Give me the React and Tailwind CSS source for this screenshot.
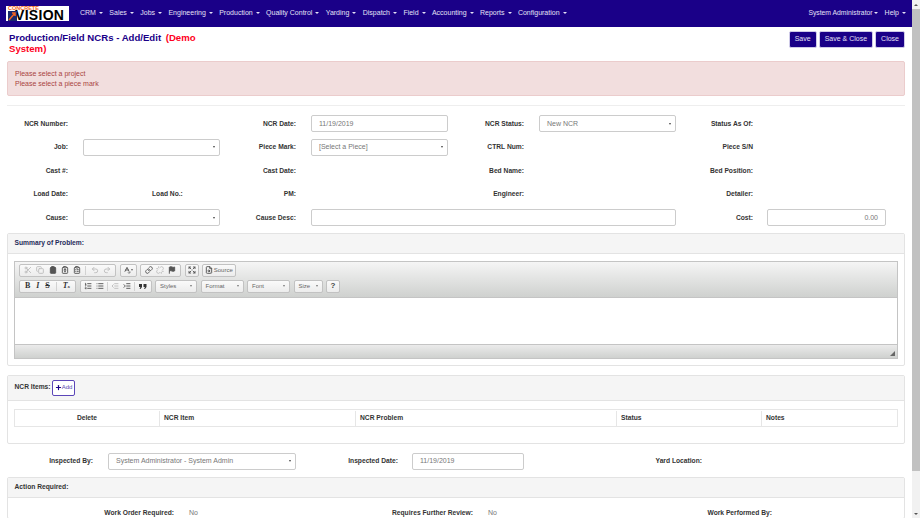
import {
  Scissors, Copy, Clipboard, ClipboardType, ClipboardList, Undo2, Redo2, SpellCheck, Link, Unlink, Flag,
  Expand, FileSearch, ListOrdered, List, IndentDecrease, IndentIncrease, Plus,
} from 'lucide-react'

const navItems = ['CRM', 'Sales', 'Jobs', 'Engineering', 'Production', 'Quality Control', 'Yarding', 'Dispatch', 'Field', 'Accounting', 'Reports', 'Configuration']

function Caret({ tight }) {
  return <span className={`${tight ? 'ml-[1px]' : 'ml-[3px]'} inline-block border-x-[2px] border-t-[2px] border-x-transparent border-t-current align-middle`} />
}

function Logo() {
  return (
    <div className="relative flex h-[15px] w-[63px] flex-col bg-white">
      <span className="pl-[2px] text-[5.5px] leading-[4px] font-bold text-[#f26522]">CONCRETE</span>
      <span className="pl-[9px] text-[14px] leading-[11px] font-bold tracking-[0.3px] text-black">VISION</span>
      <svg className="absolute bottom-0 left-[2px]" width="9" height="10" viewBox="0 0 9 10">
        <path d="M0 0h9v10H0z" fill="#1a2a6c" />
        <path d="M1 9l6-7M4 2h3v3" stroke="#f26522" strokeWidth="1.5" fill="none" />
      </svg>
    </div>
  )
}

function TopNav() {
  return (
    <nav className="flex h-[27px] shrink-0 items-center bg-[#1a0088] px-[6px] text-[7px] text-[#e4e1f6]">
      <Logo />
      <div className="ml-[11px] flex gap-[6.4px]">
        {navItems.map((item) => (
          <span key={item}>{item}<Caret /></span>
        ))}
      </div>
      <div className="ml-auto flex gap-[7px]">
        <span className="text-[6.8px]">System Administrator<Caret tight /></span>
        <span>Help<Caret /></span>
      </div>
    </nav>
  )
}

function Label({ children, className = '' }) {
  return <div className={`text-right text-[6.7px] font-bold text-[#333] ${className}`}>{children}</div>
}

function TextBox({ value, right, className = '' }) {
  return (
    <div className={`flex h-[17px] items-center rounded-[2px] border border-[#ccc] bg-white px-[7px] text-[7px] text-[#777] ${right ? 'justify-end' : ''} ${className}`}>
      {value}
    </div>
  )
}

function SelectBox({ value, className = '' }) {
  return (
    <div className={`flex h-[17px] items-center justify-between rounded-[2px] border border-[#ccc] bg-white pl-[7px] pr-[4px] text-[7px] text-[#777] ${className}`}>
      <span>{value}</span>
      <span className="border-x-[1.5px] border-t-[2px] border-x-transparent border-t-[#444]" />
    </div>
  )
}

function FormRow({ children }) {
  return (
    <div className="grid h-[23.5px] grid-cols-[61px_15px_137px_76px_15px_137px_76px_15px_137px_77px_14px_119px] items-center">
      {children}
    </div>
  )
}

function ToolGroup({ children, className = '' }) {
  return <div className={`flex h-[13.5px] items-center justify-around rounded-[2px] border border-[#c2c2c2] bg-gradient-to-b from-[#fafafa] to-[#ececec] px-[2px] ${className}`}>{children}</div>
}

function Tool({ icon: Icon, faded, filled }) {
  return <Icon size={8} strokeWidth={2.8} fill={filled ? 'currentColor' : 'none'} className={faded ? 'text-[#bdbdbd]' : 'text-[#555]'} />
}

function Divider() {
  return <span className="h-[9px] w-px bg-[#d2d2d2]" />
}

function Glyph({ children, className = '' }) {
  return <span className={`text-[8px] leading-none text-[#333] font-['Liberation_Serif',serif] ${className}`}>{children}</span>
}

function QuoteMark() {
  return (
    <svg width="8" height="5" viewBox="0 0 8 5" className="text-[#333]">
      <path d="M0 0h3v3L1.5 5H0.6L1.4 3H0zM4.5 0h3v3L6 5h-0.9L5.9 3H4.5z" fill="currentColor" />
    </svg>
  )
}

function Combo({ label, className = '' }) {
  return (
    <div className={`flex h-[13.5px] items-center justify-between rounded-[2px] border border-[#c2c2c2] bg-gradient-to-b from-[#fafafa] to-[#ececec] px-[4px] text-[6px] text-[#666] ${className}`}>
      <span>{label}</span>
      <span className="border-x-[1.5px] border-t-[2px] border-x-transparent border-t-[#777]" />
    </div>
  )
}

function Editor() {
  return (
    <div className="border border-[#c4c4c4]">
      <div className="flex h-[35px] flex-col gap-[2.5px] bg-gradient-to-b from-[#f5f5f5] to-[#cfd1cf] px-[4px] pt-[2px]">
        <div className="flex gap-[3.5px]">
          <ToolGroup className="w-[97px]">
            <Tool icon={Scissors} faded />
            <Tool icon={Copy} faded />
            <Tool icon={Clipboard} filled />
            <Tool icon={ClipboardType} />
            <Tool icon={ClipboardList} />
            <Divider />
            <Tool icon={Undo2} faded />
            <Tool icon={Redo2} faded />
          </ToolGroup>
          <ToolGroup className="w-[17px]">
            <Tool icon={SpellCheck} />
            <span className="border-x-[1.5px] border-t-[2px] border-x-transparent border-t-[#666]" />
          </ToolGroup>
          <ToolGroup className="w-[41px]">
            <Tool icon={Link} />
            <Tool icon={Unlink} faded />
            <Tool icon={Flag} filled />
          </ToolGroup>
          <ToolGroup className="w-[14px]"><Tool icon={Expand} /></ToolGroup>
          <ToolGroup className="w-[34px]">
            <Tool icon={FileSearch} />
            <span className="text-[6px] text-[#666]">Source</span>
          </ToolGroup>
        </div>
        <div className="flex gap-[3.5px]">
          <ToolGroup className="w-[57px]">
            <Glyph className="font-bold">B</Glyph>
            <Glyph className="font-bold italic">I</Glyph>
            <Glyph className="font-bold line-through">S</Glyph>
            <Divider />
            <Glyph className="font-bold italic">T<span className="text-[5px]">x</span></Glyph>
          </ToolGroup>
          <ToolGroup className="w-[72px]">
            <Tool icon={ListOrdered} />
            <Tool icon={List} />
            <Divider />
            <Tool icon={IndentDecrease} faded />
            <Tool icon={IndentIncrease} />
            <Divider />
            <QuoteMark />
          </ToolGroup>
          <Combo label="Styles" className="w-[42px]" />
          <Combo label="Format" className="w-[43px]" />
          <Combo label="Font" className="w-[43px]" />
          <Combo label="Size" className="w-[29px]" />
          <div className="flex h-[13.5px] w-[14px] items-center justify-center rounded-[2px] border border-[#c2c2c2] bg-gradient-to-b from-[#fafafa] to-[#ececec] text-[8px] font-bold text-[#444]">?</div>
        </div>
      </div>
      <div className="h-[48px] border-y border-[#c4c4c4] bg-white" />
      <div className="flex h-[13px] items-end justify-end bg-gradient-to-b from-[#ebebeb] to-[#cfd1cf] p-[2px]">
        <svg width="5" height="5" viewBox="0 0 5 5"><path d="M5 0v5H0z" fill="#666" /></svg>
      </div>
    </div>
  )
}

function Panel({ heading, headingClass, children, className = '' }) {
  return (
    <section className={`rounded-[2px] border border-[#e3e3e3] bg-white ${className}`}>
      <div className={`flex items-center border-b border-[#e3e3e3] bg-[#f5f5f5] px-[6.5px] text-[6.7px] font-bold text-[#333] ${headingClass}`}>{heading}</div>
      {children}
    </section>
  )
}

const columns = [
  { name: 'Delete', width: 'w-[145px]', center: true },
  { name: 'NCR Item', width: 'w-[196px]' },
  { name: 'NCR Problem', width: 'w-[261px]' },
  { name: 'Status', width: 'w-[145px]' },
  { name: 'Notes', width: 'flex-1' },
]

export default function App() {
  return (
    <div className="flex h-screen overflow-hidden bg-white font-['Liberation_Sans',Arial,sans-serif]">
      <div className="flex min-w-0 flex-1 flex-col overflow-hidden">
        <TopNav />
        <main className="px-[7px]">
          <div className="flex h-[34px] items-start justify-between pt-[4px] pl-[2px]">
            <h1 className="pt-[2px] text-[9.6px] leading-[10.5px] font-bold text-[#1a0088]">
              <div>Production/Field NCRs - Add/Edit <span className="ml-[2px] text-[#ff0022]">(Demo</span></div>
              <div className="text-[#ff0022]">System)</div>
            </h1>
            <div className="flex gap-[2px]">
              {['Save', 'Save & Close', 'Close'].map((b) => (
                <button key={b} className="h-[17px] rounded-[2px] border border-[#cfcbe8] bg-[#1a0088] px-[5px] text-[7px] text-[#e4e1f6]">{b}</button>
              ))}
            </div>
          </div>

          <div className="flex h-[35px] flex-col justify-center rounded-[2px] border border-[#ebcccc] bg-[#f2dede] px-[7px] text-[7px] leading-[9.5px] text-[#a94442]">
            <div>Please select a project</div>
            <div>Please select a piece mark</div>
          </div>

          <hr className="mt-[9px] border-[#eee]" />

          <div className="mt-[6px]">
            <FormRow>
              <Label>NCR Number:</Label><span /><span />
              <Label>NCR Date:</Label><span /><TextBox value="11/19/2019" />
              <Label>NCR Status:</Label><span /><SelectBox value="New NCR" />
              <Label>Status As Of:</Label>
            </FormRow>
            <FormRow>
              <Label>Job:</Label><span /><SelectBox />
              <Label>Piece Mark:</Label><span /><SelectBox value="[Select a Piece]" />
              <Label>CTRL Num:</Label><span /><span />
              <Label>Piece S/N</Label>
            </FormRow>
            <FormRow>
              <Label>Cast #:</Label><span /><span />
              <Label>Cast Date:</Label><span /><span />
              <Label>Bed Name:</Label><span /><span />
              <Label>Bed Position:</Label>
            </FormRow>
            <FormRow>
              <Label>Load Date:</Label><span /><Label className="pl-[69px] !text-left">Load No.:</Label>
              <Label>PM:</Label><span /><span />
              <Label>Engineer:</Label><span /><span />
              <Label>Detailer:</Label>
            </FormRow>
            <FormRow>
              <Label>Cause:</Label><span /><SelectBox />
              <Label>Cause Desc:</Label><span /><TextBox className="col-span-4" />
              <Label>Cost:</Label><span /><TextBox value="0.00" right />
            </FormRow>
          </div>

          <Panel heading="Summary of Problem:" headingClass="h-[20px] !text-[#1f2a5a]" className="mt-[3px] h-[133px]">
            <div className="px-[6px] pt-[7px]"><Editor /></div>
          </Panel>

          <Panel
            heading={
              <>
                NCR Items:
                <button className="ml-[1.5px] flex h-[16px] w-[23px] items-center justify-center rounded-[2px] border border-[#5b46b8] bg-white text-[6px] font-normal text-[#5a4bb0]">
                  <Plus size={7} strokeWidth={4} className="text-[#1a0088]" />Add
                </button>
              </>
            }
            headingClass="h-[25px]"
            className="mt-[9px] h-[69px]"
          >
            <div className="mx-[6px] mt-[8px] flex h-[18px] border border-[#e6e6e6] pt-[1px]">
              {columns.map((c) => (
                <div key={c.name} className={`flex items-center border-r border-[#e6e6e6] px-[4px] text-[6.7px] font-bold text-[#333] last:border-r-0 ${c.width} ${c.center ? 'justify-center' : ''}`}>{c.name}</div>
              ))}
            </div>
          </Panel>

          <div className="mt-[9px] grid h-[17px] grid-cols-[86px_15px_188px_102px_14px_112px_178px] items-center">
            <Label>Inspected By:</Label><span /><SelectBox value="System Administrator - System Admin" />
            <Label>Inspected Date:</Label><span /><TextBox value="11/19/2019" />
            <Label>Yard Location:</Label>
          </div>

          <Panel heading="Action Required:" headingClass="h-[20px]" className="mt-[7px]">
            <div className="grid grid-cols-[166px_15px_20px_264px_15px_20px_264px] items-center pt-[10px] text-[7px] text-[#777]">
              <Label>Work Order Required:</Label><span /><span>No</span>
              <Label>Requires Further Review:</Label><span /><span>No</span>
              <Label>Work Performed By:</Label>
            </div>
          </Panel>
        </main>
      </div>

      <div className="flex w-[8px] shrink-0 flex-col bg-[#f1f1f1]">
        <div className="flex h-[9px] items-center justify-center"><span className="border-x-[2px] border-b-[2px] border-x-transparent border-b-[#555]" /></div>
        <div className="h-[462px] bg-[#c1c1c1]" />
        <div className="mt-auto flex h-[9px] items-center justify-center"><span className="border-x-[2px] border-t-[2px] border-x-transparent border-t-[#555]" /></div>
      </div>
    </div>
  )
}
